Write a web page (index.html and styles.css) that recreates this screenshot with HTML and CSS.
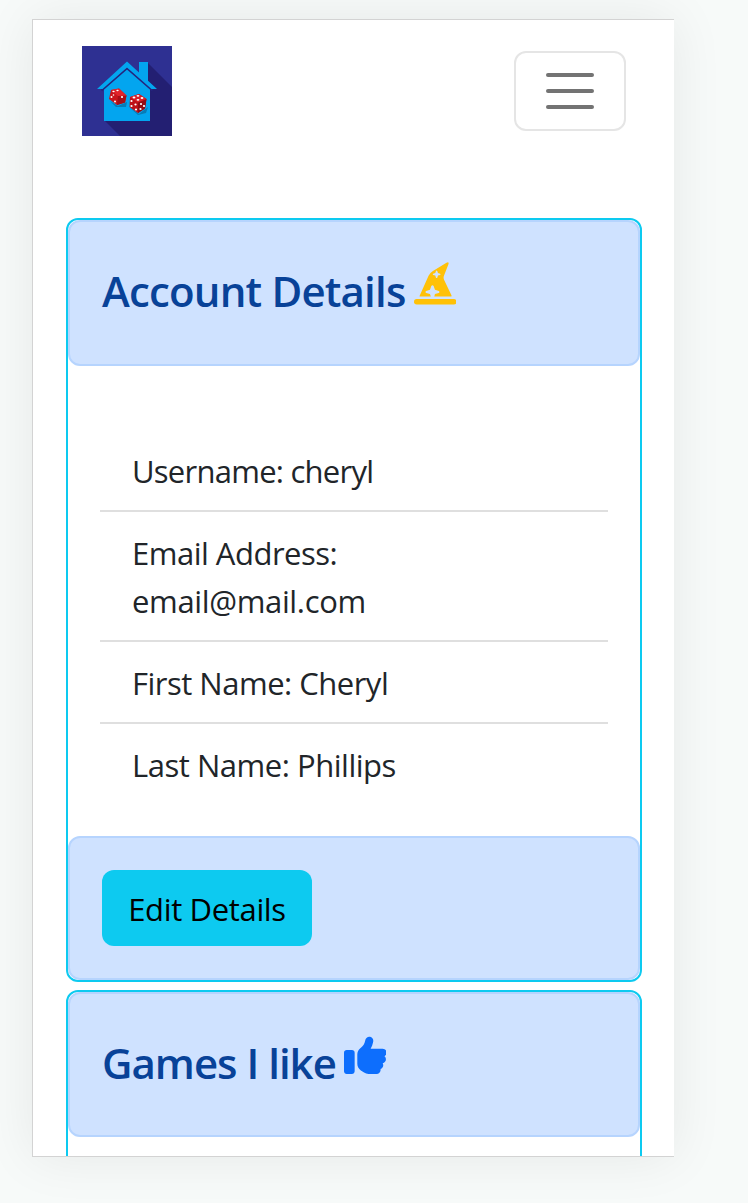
FILE: index.html
```html
<!DOCTYPE html>
<html lang="en">
<head>
<meta charset="utf-8">
<title>Account</title>
<link rel="stylesheet" href="styles.css">
</head>
<body>
<main class="screen">
  <nav class="navbar">
    <svg class="logo" viewBox="0 0 90 90" role="img" aria-label="Home">
      <rect width="90" height="90" fill="#2e3092"/>
      <path d="M66 17 90 41V90H38L22 74Z" fill="#231f72"/>
      <path d="M57 16h9v20L57 28Z" fill="#03a5ef"/>
      <path d="M22 42 45 21 68 42V75H22Z" fill="#03a5ef"/>
      <path d="M19.500 44.500 45 22.300 70.500 44.500" fill="none" stroke="#25247e" stroke-width="2"/>
      <path d="M15 43 45 15.500 75 43H69.500L45 21.500 20.500 43Z" fill="#03a5ef"/>
      <path d="M28 55 36 60 45 56 44 61 34 61ZM47 61 57 68 66 61 64 67 56 69Z" fill="#087bb5"/>
      <path d="m29 44 8-1.500 7.500 7-1.500 7-8 2.500-8-6Z" fill="#c9151b"/>
      <path d="m36 50 8.500-.5-1.500 7-8 2.500Z" fill="#a50e16"/>
      <path d="m29 44 8-1.500 7.500 7-8.500.5Z" fill="#e1252b"/>
      <path d="m48 51 9-3 7.500 5-1.500 9.500-7 4.500-8.500-6Z" fill="#bd1018"/>
      <path d="m56 56 8.500-3-1.500 9.500-7 4.500Z" fill="#920c14"/>
      <path d="m48 51 9-3 7.500 5-8.500 3.500Z" fill="#d91e27"/>
      <g fill="#fff">
        <ellipse cx="31.500" cy="45.500" rx="1.200" ry=".8"/><ellipse cx="35.500" cy="44.500" rx="1.200" ry=".8"/><circle cx="29.500" cy="51" r="1"/><circle cx="33" cy="55.500" r="1"/><circle cx="40" cy="51" r="1.100"/><circle cx="31.500" cy="49" r=".8"/>
        <ellipse cx="52" cy="51.500" rx="1.400" ry=".9"/><ellipse cx="56" cy="49.800" rx="1.400" ry=".9"/><ellipse cx="60" cy="52" rx="1.400" ry=".9"/><ellipse cx="56" cy="53.800" rx="1.400" ry=".9"/><circle cx="49.500" cy="55" r="1.100"/><circle cx="53.500" cy="58.500" r="1.100"/><circle cx="49.500" cy="60" r="1.100"/><circle cx="54" cy="63.500" r="1.100"/><circle cx="59" cy="58" r="1.100"/><circle cx="62" cy="60" r="1.100"/><circle cx="58.500" cy="63" r="1.100"/>
      </g>
    </svg>
    <button class="toggler" aria-label="Menu"><span></span><span></span><span></span></button>
  </nav>

  <section class="card">
    <header class="panel card-header">
      <h2 class="title title-account">Account Details</h2>
      <svg class="icon hat" viewBox="0 0 512 512">
        <rect y="446" width="512" height="66" rx="33"/>
        <path d="M192 386l-46-14q-17-12 0-24l46-14 16-46q14-17 28 0l16 46 46 14q17 12 0 24l-46 14-8 30h197q15 0 9-15L361 214q-9-22-2-45L415 23Q421-7 390 10L228 107Q193 127 175 166L68 407q-4 9 7 9h127ZM256 163l-26-7q-9-8 0-16l26-7 8-26q8-9 16 0l8 26 26 7q9 8 0 16l-26 7-8 26q-8 9-16 0Z" fill-rule="evenodd"/>
      </svg>
    </header>
    <ul class="details">
      <li><span class="t-user">Username: cheryl</span></li>
      <li><span class="t-email">Email Address:</span><br><span class="t-mail">email@mail.com</span></li>
      <li><span class="t-first">First Name: Cheryl</span></li>
      <li><span class="t-last">Last Name: Phillips</span></li>
    </ul>
    <footer class="panel card-footer">
      <button class="edit">Edit Details</button>
    </footer>
  </section>

  <section class="card card-open">
    <header class="panel card-header">
      <h2 class="title title-games">Games I like</h2>
      <svg class="icon thumb" viewBox="0 0 512 512">
        <path d="M313.400 32.900c26 5.200 42.900 30.500 37.700 56.500l-2.300 11.400c-5.300 26.700-15.100 52.100-28.800 75.200H464c26.500 0 48 21.500 48 48c0 18.500-10.500 34.600-25.900 42.600C497 275.400 504 288.900 504 304c0 23.400-16.800 42.900-38.900 47.100c4.400 7.300 6.900 15.800 6.900 24.900c0 21.300-13.900 39.400-33.100 45.600c.7 3.300 1.100 6.800 1.100 10.400c0 26.500-21.500 48-48 48H294.500c-19 0-37.500-5.600-53.300-16.100l-38.500-25.700C176 420.400 160 390.400 160 358.300V247.100c0-29.200 13.300-56.700 36-75l7.400-5.900c26.500-21.200 44.600-51 51.200-84.200l2.300-11.400c5.200-26 30.500-42.900 56.500-37.700zM32 192H96c17.700 0 32 14.300 32 32V448c0 17.700-14.300 32-32 32H32c-17.700 0-32-14.300-32-32V224c0-17.700 14.300-32 32-32z"/>
      </svg>
    </header>
  </section>
</main>
</body>
</html>
```

FILE: styles.css
```css
* { box-sizing: border-box; }
html { height: 1203px; overflow: hidden; }
body {
  margin: 0;
  padding: 19px 0 0 32px;
  height: 1203px;
  overflow: hidden;
  background: #f7faf9;
  color: #212529;
  font-family: "Segoe UI", "Open Sans", "Noto Sans", sans-serif;
  font-size: 31px;
  font-weight: 400;
  line-height: 48px;
}
.screen {
  width: 642px;
  height: 1138px;
  border: 1px solid #d3d3d3;
  border-right: 0;
  background: #fff;
  box-shadow: 0 0 50px rgba(0, 0, 0, .075);
  display: flex;
  flex-direction: column;
  gap: 8px;
  overflow: hidden;
  padding: 0 32px 0 33px;
}
.navbar {
  flex: none;
  height: 190px;
  padding: 26px 16px 0;
  display: flex;
  align-items: flex-start;
  justify-content: space-between;
}
.logo { width: 90px; height: 90px; display: block; }
.toggler {
  margin-top: 5px;
  width: 112px;
  height: 80px;
  border: 2px solid #e5e5e5;
  border-radius: 12px;
  background: #fff;
  padding: 0;
  display: flex;
  flex-direction: column;
  align-items: center;
  justify-content: center;
  gap: 12px;
}
.toggler span { width: 48px; height: 4px; border-radius: 2px; background: #737373; }
.card {
  flex: none;
  height: 764px;
  border: 2px solid #0dcaf0;
  border-radius: 12px;
  display: flex;
  flex-direction: column;
}
.card-open { height: 300px; }
.panel {
  flex: none;
  background: #cfe2ff;
  border: 2px solid #b6d4fe;
  border-radius: 12px;
  padding: 32px;
  display: flex;
  align-items: flex-start;
}
.card-header { height: 146px; gap: 8px; padding-top: 41px; }
.card-open .card-header { height: 145px; }
.title {
  margin: 0;
  font-size: 42px;
  line-height: 56px;
  font-weight: 600;
  color: #084298;
  white-space: nowrap;
}
.title-account { letter-spacing: -.82px; }
.title-games { letter-spacing: -1px; }
.icon { width: 42.600px; height: 42.600px; flex: none; display: block; }
.hat { fill: #ffc107; margin-top: -1px; }
.thumb { fill: #0d6efd; margin-top: -1px; }
.details {
  flex: 1;
  list-style: none;
  margin: 0;
  padding: 64px 32px 0;
}
.details li {
  padding: 17px 32px 15px;
  border-bottom: 2px solid #dfdfdf;
}
.details li:last-child { border-bottom: 0; }
.t-user { letter-spacing: -.75px; }
.t-email { letter-spacing: -.5px; }
.t-mail { letter-spacing: -.35px; }
.t-first { letter-spacing: -.5px; }
.t-last { letter-spacing: -.47px; }
.card-footer { height: 144px; }
.edit {
  width: 210px;
  height: 76px;
  padding: 2px 0 0;
  border: 0;
  border-radius: 12px;
  background: #0dcaf0;
  color: #000;
  font: inherit;
  letter-spacing: -.35px;
  white-space: nowrap;
}
```
